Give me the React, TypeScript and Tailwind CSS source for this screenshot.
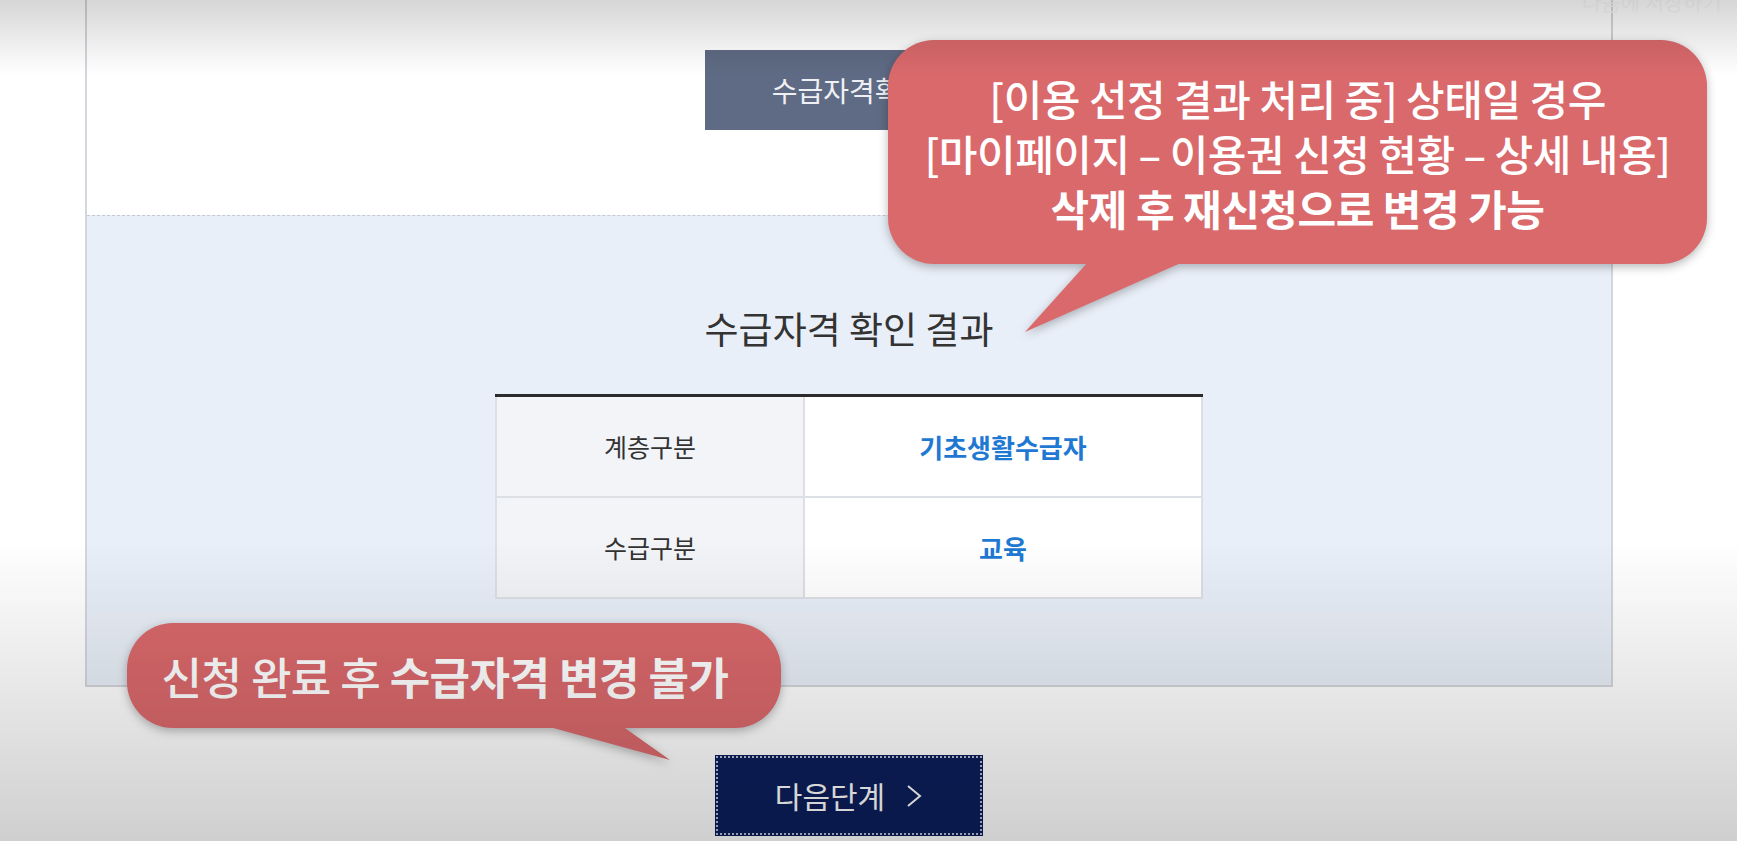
import React from "react";

const FONT = { fontFamily: '"Noto Sans CJK KR", "Noto Sans", sans-serif' };

function Callout({ className, tail, children }: { className: string; tail: React.ReactNode; children: React.ReactNode }) {
  return (
    <div className={`absolute drop-shadow-[0_3px_5px_rgba(0,0,0,0.28)] ${className}`}>
      <div className="relative flex h-full w-full flex-col items-center justify-center rounded-[46px] bg-[#da696c] text-white">
        {children}
      </div>
      {tail}
    </div>
  );
}

export default function App() {
  const rows = [
    { label: "계층구분", value: "기초생활수급자" },
    { label: "수급구분", value: "교육" },
  ];

  return (
    <div className="relative h-[841px] w-[1737px] overflow-hidden bg-white" style={FONT}>
      {/* panel */}
      <div className="ml-[85px] w-[1528px] border-x-2 border-b-2 border-[#d3d6dc]">
        <div className="flex h-[215px] justify-center">
          <div className="mt-[50px] flex h-[80px] w-[288px] items-center justify-center bg-[#5f6b84] text-[28px] text-[#eef0f4]">
            수급자격확인
          </div>
        </div>
        <div className="flex h-[470px] flex-col items-center border-t border-dashed border-[#c4c9d2] bg-[#e9eff8]">
          <h2 className="mt-[89px] text-[37px] leading-[46px] text-[#333]">수급자격 확인 결과</h2>
          <div className="mt-[43px] w-[708px] border-t-[3px] border-[#2b2b2b]">
            {rows.map((r) => (
              <div key={r.label} className="flex h-[101px] border-b-2 border-[#dcdfe3]">
                <div className="flex w-[310px] items-center justify-center border-x-2 border-[#dcdfe3] bg-[#f2f4f8] text-[25px] text-[#333]">
                  {r.label}
                </div>
                <div className="flex flex-1 items-center justify-center border-r-2 border-[#dcdfe3] bg-white text-[26px] font-bold text-[#1f79d3]">
                  {r.value}
                </div>
              </div>
            ))}
          </div>
        </div>
      </div>

      {/* next step */}
      <div className="ml-[85px] flex w-[1528px] justify-center">
        <button className="mt-[69px] flex h-[79px] w-[266px] items-center justify-center gap-5 border-2 border-dotted border-[#b9bfd2] bg-[#0c1f5c] text-[30px] text-white outline outline-1 outline-[#0c1f5c]">
          <span>다음단계</span>
          <svg width="18" height="24" viewBox="0 0 18 24" fill="none" stroke="white" strokeWidth="2">
            <path d="M3 2l12 10-12 10" />
          </svg>
        </button>
      </div>

      <div className="absolute left-[1582px] top-[-14px] text-[21px] text-[#f7f7f7]">다음에 저장하기</div>

      <Callout
        className="left-[888px] top-[40px] h-[224px] w-[819px]"
        tail={
          <svg className="absolute left-[130px] top-[222px]" width="170" height="72" viewBox="0 0 170 72">
            <polygon points="70,0 165,0 7,70" fill="#da696c" />
          </svg>
        }
      >
        <div className="text-center text-[42px] font-medium leading-[55px] tracking-[-0.5px]">
          <div>[이용 선정 결과 처리 중] 상태일 경우</div>
          <div>[마이페이지 – 이용권 신청 현황 – 상세 내용]</div>
          <div className="font-bold">삭제 후 재신청으로 변경 가능</div>
        </div>
      </Callout>

      <Callout
        className="left-[127px] top-[623px] h-[105px] w-[654px]"
        tail={
          <svg className="absolute left-[415px] top-[103px]" width="135" height="40" viewBox="0 0 135 40">
            <polygon points="4,0 80,0 128,34" fill="#da696c" />
          </svg>
        }
      >
        <div className="pr-[18px] text-[44px] font-medium tracking-[-0.5px]">
          신청 완료 후 <span className="font-bold">수급자격 변경 불가</span>
        </div>
      </Callout>

      {/* video vignette */}
      <div className="pointer-events-none absolute inset-0 bg-[linear-gradient(to_bottom,rgba(0,0,0,0.16)_0px,rgba(0,0,0,0)_75px,rgba(0,0,0,0)_540px,rgba(0,0,0,0.19)_841px)]" />
    </div>
  );
}
